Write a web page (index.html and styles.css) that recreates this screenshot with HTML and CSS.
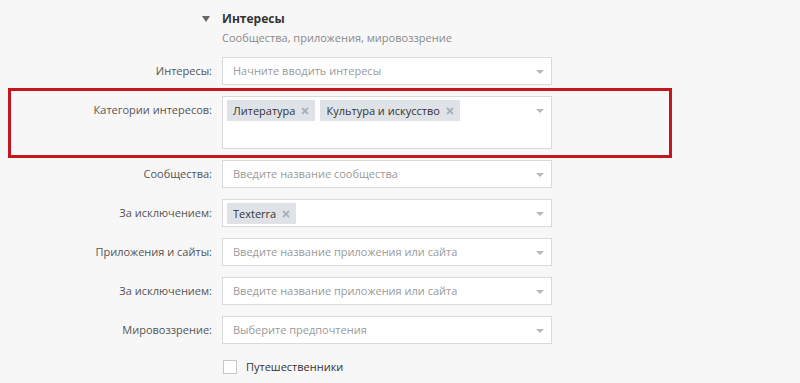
FILE: index.html
```html
<!DOCTYPE html>
<html lang="ru">
<head>
<meta charset="utf-8">
<link rel="stylesheet" href="styles.css">
</head>
<body>
<div class="page">
  <div class="head">
    <span class="caret"></span>
    <div class="head-text">
      <div class="title">Интересы</div>
      <div class="subtitle">Сообщества, приложения, мировоззрение</div>
    </div>
  </div>
  <div class="form">
    <div class="label">Интересы:</div>
    <div class="field"><span class="ph">Начните вводить интересы</span><span class="arrow"></span></div>

    <div class="label">Категории интересов:</div>
    <div class="field tall">
      <span class="tag">Литература<svg class="x" viewBox="0 0 8 8"><path d="M1 1L7 7M7 1L1 7"/></svg></span>
      <span class="tag">Культура и искусство<svg class="x" viewBox="0 0 8 8"><path d="M1 1L7 7M7 1L1 7"/></svg></span>
      <span class="arrow"></span>
    </div>

    <div class="label">Сообщества:</div>
    <div class="field"><span class="ph">Введите название сообщества</span><span class="arrow"></span></div>

    <div class="label">За исключением:</div>
    <div class="field tags"><span class="tag">Texterra<svg class="x" viewBox="0 0 8 8"><path d="M1 1L7 7M7 1L1 7"/></svg></span><span class="arrow"></span></div>

    <div class="label">Приложения и сайты:</div>
    <div class="field"><span class="ph">Введите название приложения или сайта</span><span class="arrow"></span></div>

    <div class="label">За исключением:</div>
    <div class="field"><span class="ph">Введите название приложения или сайта</span><span class="arrow"></span></div>

    <div class="label">Мировоззрение:</div>
    <div class="field"><span class="ph">Выберите предпочтения</span><span class="arrow"></span></div>

    <div></div>
    <label class="check"><span class="box"></span>Путешественники</label>
  </div>
  <div class="highlight"></div>
</div>
</body>
</html>
```

FILE: styles.css
```css
html, body {
  margin: 0;
  padding: 0;
}
body {
  background: #f7f7f7;
  font-family: "Open Sans", "DejaVu Sans", sans-serif;
  font-size: 11px;
  color: #333;
  width: 800px;
  height: 383px;
  overflow: hidden;
}
.page {
  position: relative;
  padding-top: 10px;
}
.head {
  display: flex;
  align-items: flex-start;
  padding-left: 202px;
}
.caret {
  width: 0;
  height: 0;
  border-left: 4px solid transparent;
  border-right: 4px solid transparent;
  border-top: 6px solid #666;
  margin-top: 6px;
  margin-right: 12px;
}
.title {
  font-weight: bold;
  font-size: 12px;
  color: #333;
  line-height: 18px;
}
.subtitle {
  color: #8a8a8a;
  font-size: 11px;
  line-height: 18px;
  margin-top: 1px;
}
.form {
  display: grid;
  grid-template-columns: 212px 330px;
  column-gap: 10px;
  row-gap: 11px;
  margin-top: 10px;
}
.label {
  text-align: right;
  color: #555;
  line-height: 28px;
  white-space: nowrap;
}
.field {
  position: relative;
  background: #fff;
  border: 1px solid #dadada;
  height: 28px;
  box-sizing: border-box;
  display: flex;
  align-items: flex-start;
  flex-wrap: wrap;
  gap: 5px;
  padding: 0 10px;
}
.field.tall {
  height: 53px;
  padding: 3px 4px;
}
.field.tags {
  padding: 3px 4px;
}
.ph {
  color: #9a9a9a;
  line-height: 26px;
}
.tag {
  display: flex;
  align-items: center;
  background: #dfe3e8;
  color: #333;
  height: 21px;
  padding: 0 6px 0 6px;
  white-space: nowrap;
}
.x {
  width: 8px;
  height: 8px;
  margin-left: 6px;
  stroke: #a9b1bb;
  stroke-width: 1.8;
  fill: none;
}
.arrow {
  position: absolute;
  right: 7px;
  top: 12px;
  width: 0;
  height: 0;
  border-left: 4px solid transparent;
  border-right: 4px solid transparent;
  border-top: 4px solid #b8b8b8;
}
.check {
  display: flex;
  align-items: center;
  color: #333;
  margin-top: 4px;
  line-height: 16px;
}
.box {
  width: 12px;
  height: 12px;
  border: 1px solid #c8c8c8;
  background: #fff;
  margin-left: 1px;
  margin-right: 9px;
}
.highlight {
  position: absolute;
  left: 8px;
  top: 88px;
  width: 664px;
  height: 70px;
  box-sizing: border-box;
  border: 3px solid #c4161c;
}
```
